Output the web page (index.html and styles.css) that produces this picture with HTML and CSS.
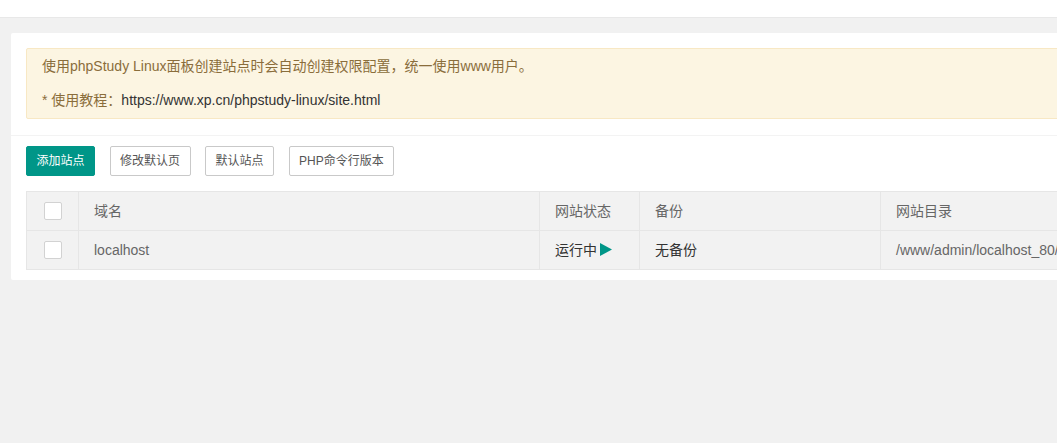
FILE: index.html
```html
<!DOCTYPE html>
<html lang="zh-CN">
<head>
<meta charset="utf-8">
<title>站点管理</title>
<link rel="stylesheet" href="styles.css">
</head>
<body>
<header class="topbar"></header>
<main class="card">
  <section class="notice-wrap">
    <div class="alert">
      <p class="alert-text">使用phpStudy Linux面板创建站点时会自动创建权限配置，统一使用www用户。<br><br>* 使用教程：<a class="alert-link" href="#">https://www.xp.cn/phpstudy-linux/site.html</a></p>
    </div>
  </section>
  <section class="content">
    <div class="toolbar">
      <button class="btn btn-primary" type="button">添加站点</button>
      <button class="btn" type="button">修改默认页</button>
      <button class="btn" type="button">默认站点</button>
      <button class="btn" type="button">PHP命令行版本</button>
    </div>
    <table class="sites">
      <colgroup>
        <col class="c-check">
        <col class="c-name">
        <col class="c-status">
        <col class="c-backup">
        <col class="c-dir">
      </colgroup>
      <thead>
        <tr>
          <th class="cell-check"><span class="checkbox"></span></th>
          <th>域名</th>
          <th>网站状态</th>
          <th>备份</th>
          <th>网站目录</th>
        </tr>
      </thead>
      <tbody>
        <tr>
          <td class="cell-check"><span class="checkbox"></span></td>
          <td>localhost</td>
          <td class="dark">运行中<svg class="play" width="12" height="13" viewBox="0 0 12 13"><polygon points="0,0 12,6.5 0,13" fill="#009688"/></svg></td>
          <td class="dark">无备份</td>
          <td class="path">/www/admin/localhost_80/wwwroot</td>
        </tr>
      </tbody>
    </table>
  </section>
</main>
</body>
</html>
```

FILE: styles.css
```css
html, body {
  margin: 0;
  padding: 0;
  overflow: hidden;
}
body {
  background: #f1f1f1;
  font-family: "Liberation Sans", "Noto Sans CJK SC", sans-serif;
  font-size: 14px;
  color: #666;
  width: 1057px;
  height: 443px;
}
.topbar {
  height: 17px;
  background: #fff;
  border-bottom: 1px solid #e8e8e8;
}
.card {
  margin: 15px 0 0 11px;
  width: 1204px;
  background: #fff;
  border-radius: 2px;
}
.notice-wrap {
  padding: 15px 15px 16px;
  border-bottom: 1px solid #f3f3f3;
}
.alert {
  background: #fcf5e2;
  border: 1px solid #f8e8c4;
  border-radius: 2px;
  padding: 9px 15px;
}
.alert-text {
  margin: 0;
  line-height: 17px;
  color: #8a6d3b;
  white-space: nowrap;
}
.alert-link {
  color: #333;
  text-decoration: none;
}
.content {
  padding: 10px 15px 10px;
}
.toolbar {
  display: flex;
  gap: 14.5px;
  height: 30px;
}
.btn {
  height: 30px;
  line-height: 28px;
  padding: 0 9.5px;
  border: 1px solid #c9c9c9;
  border-radius: 2px;
  background: #fff;
  color: #555;
  font-family: inherit;
  font-size: 12px;
  white-space: nowrap;
}
.btn-primary {
  background: #009688;
  border-color: #009688;
  color: #fff;
}
.sites {
  margin-top: 15px;
  border-collapse: collapse;
  table-layout: fixed;
  width: 1174px;
  background: #f2f2f2;
}
.c-check { width: 52px; }
.c-name { width: 461px; }
.c-status { width: 100px; }
.c-backup { width: 241px; }
.c-dir { width: 320px; }
.sites th,
.sites td {
  border: 1px solid #e6e6e6;
  padding: 9px 15px;
  line-height: 20px;
  height: 20px;
  text-align: left;
  font-weight: normal;
  color: #666;
  white-space: nowrap;
  overflow: hidden;
}
.sites .cell-check {
  padding: 9px 0;
}
.checkbox {
  display: block;
  width: 16px;
  height: 16px;
  margin: 1px auto;
  border: 1px solid #d2d2d2;
  border-radius: 2px;
  background: #fff;
}
.sites td.dark {
  color: #333;
}
.play {
  display: inline-block;
  vertical-align: -1px;
  margin-left: 3px;
}
```
